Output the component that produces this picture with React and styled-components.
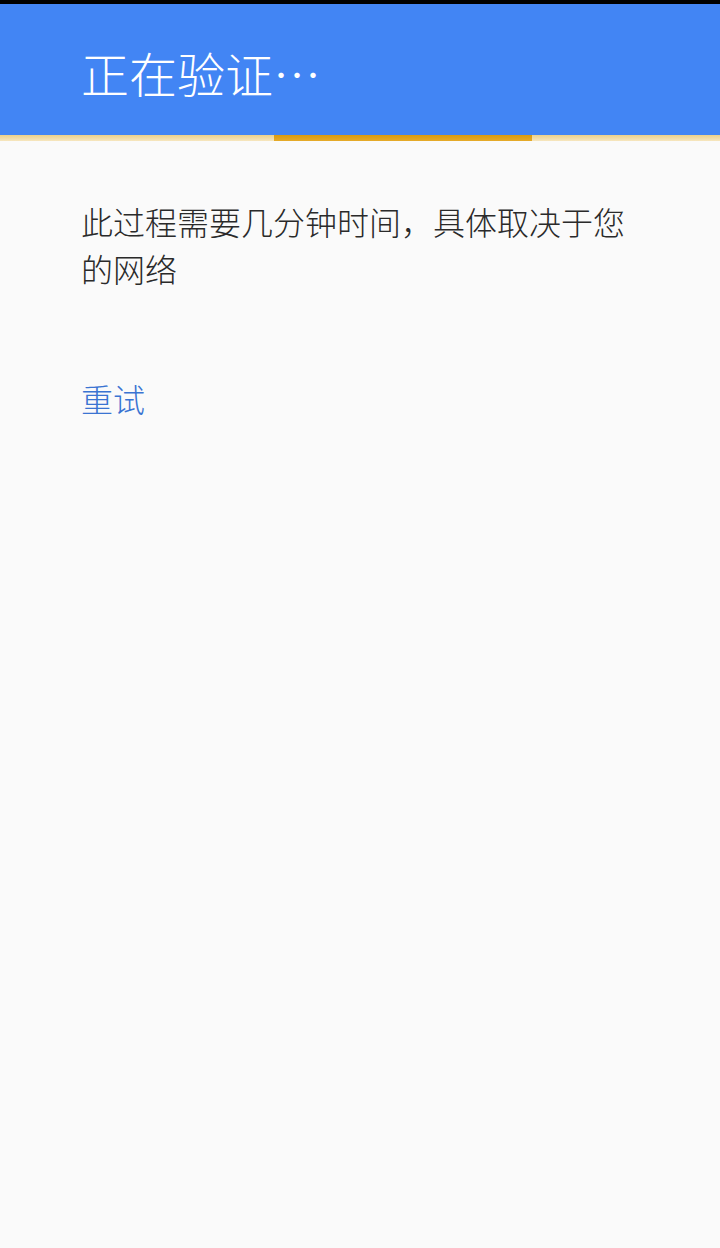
import React from "react";
import styled, { createGlobalStyle } from "styled-components";

const Global = createGlobalStyle`
  html, body { margin: 0; padding: 0; background: #fafafa; }
  body { font-family: "Noto Sans CJK SC", "Noto Sans", sans-serif; }
`;

const Screen = styled.div`
  width: 720px;
  min-height: 1248px;
  background: #fafafa;
  display: flex;
  flex-direction: column;
`;

const StatusBar = styled.div`
  height: 4px;
  background: #000;
`;

const Header = styled.header`
  height: 131px;
  background: #4285f4;
  display: flex;
  align-items: center;
  padding: 0 0 0 81px;
  box-sizing: border-box;
`;

const Title = styled.h1`
  margin: 5px 0 0 0;
  color: #fff;
  font-size: 48px;
  font-weight: 300;
  line-height: 1;
`;

const Progress = styled.div`
  position: relative;
  height: 6px;
  background: linear-gradient(#ecd08a, #f6e6bf);
`;

const ProgressSegment = styled.div`
  position: absolute;
  top: 0;
  bottom: 0;
  background: linear-gradient(#d99a10, #e6ab2a);
`;

const Content = styled.main`
  padding: 57px 81px 0 81px;
  display: flex;
  flex-direction: column;
  align-items: flex-start;
`;

const Message = styled.p`
  margin: 0;
  color: #2a2a2a;
  font-size: 32px;
  font-weight: 300;
  line-height: 47px;
  width: 560px;
`;

const RetryButton = styled.button`
  margin-top: 83px;
  padding: 0;
  border: none;
  background: none;
  color: #3a74d2;
  font-family: inherit;
  font-size: 32px;
  font-weight: 300;
  line-height: 47px;
  cursor: pointer;
`;

export default function App() {
  return (
    <Screen>
      <Global />
      <StatusBar />
      <Header>
        <Title>正在验证…</Title>
      </Header>
      <Progress>
        <ProgressSegment style={{ left: 274, width: 258 }} />
      </Progress>
      <Content>
        <Message>此过程需要几分钟时间，具体取决于您的网络</Message>
        <RetryButton>重试</RetryButton>
      </Content>
    </Screen>
  );
}
